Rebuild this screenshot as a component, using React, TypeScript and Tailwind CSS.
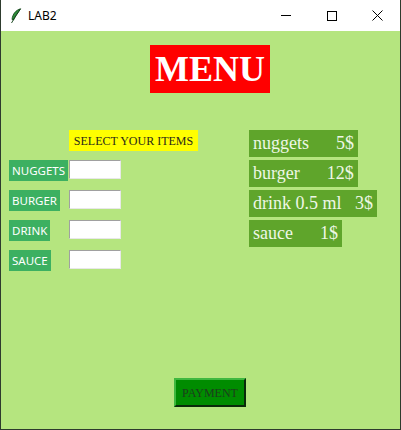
/**
 * LAB2 menu window
 *
 * Order form: item labels with quantity inputs, a price list,
 * and a payment button.
 */

const items = ["NUGGETS", "BURGER", "DRINK", "SAUCE"];

const prices = [
  "nuggets      5$",
  "burger      12$",
  "drink 0.5 ml   3$",
  "sauce      1$",
];

function Feather() {
  return (
    <svg width="12" height="16" viewBox="0 0 12 16">
      <path d="M10.5 0.8 C6 2 2.5 6 2 11.5 L3.5 12 C5 8 8 4.5 10.5 0.8 Z" fill="#2f8f3a" stroke="#0d3d14" strokeWidth="0.8" />
      <path d="M10.5 0.8 C8 5 5 9 1.5 15" fill="none" stroke="#0d3d14" strokeWidth="0.9" />
    </svg>
  );
}

function TitleBar() {
  return (
    <div className="flex h-[31px] items-center bg-white">
      <div className="ml-[9px] mt-[1px]">
        <Feather />
      </div>
      <span className="ml-[6px] text-[12px] text-black" style={{ fontFamily: '"Noto Sans", sans-serif' }}>
        LAB2
      </span>
      <div className="ml-auto flex items-center">
        {/* Minimize */}
        <div className="flex h-[31px] w-[46px] items-center justify-center">
          <div className="h-px w-[10px] bg-black" />
        </div>
        {/* Maximize */}
        <div className="flex h-[31px] w-[45px] items-center justify-center">
          <div className="h-[10px] w-[10px] border border-black" />
        </div>
        {/* Close */}
        <div className="flex h-[31px] w-[46px] items-center justify-center">
          <svg width="11" height="11" viewBox="0 0 11 11">
            <path d="M0.5 0.5 L10.5 10.5 M10.5 0.5 L0.5 10.5" stroke="#000" strokeWidth="1" />
          </svg>
        </div>
      </div>
    </div>
  );
}

export default function App() {
  return (
    <div className="flex h-[430px] w-[401px] flex-col border-x border-b border-[#2e3b2e] bg-white">
      <TitleBar />

      <div className="flex flex-1 flex-col bg-[#b5e57f]">
        {/* Heading */}
        <div
          className="ml-[149px] mt-[14px] flex h-[48px] w-[120px] items-center justify-center bg-[#ff0000] text-[36px] font-bold text-white"
          style={{ fontFamily: '"Liberation Serif", serif' }}
        >
          MENU
        </div>

        <div className="mt-[37px] flex items-start">
          {/* Order column */}
          <div className="flex flex-col">
            <div
              className="ml-[68px] flex h-[21px] w-[129px] items-center justify-center bg-[#ffff00] text-[12px] text-[#2a2a1a]"
              style={{ fontFamily: '"Liberation Serif", serif' }}
            >
              SELECT YOUR ITEMS
            </div>
            <div className="mt-[9px] flex flex-col gap-[9px]">
              {items.map((item) => (
                <div key={item} className="grid grid-cols-[68px_52px] items-start">
                  <div
                    className="ml-[8px] flex h-[21px] items-center justify-self-start bg-[#3cb061] px-[3px] text-[11.5px] text-white"
                    style={{ fontFamily: '"Noto Sans", sans-serif' }}
                  >
                    {item}
                  </div>
                  <input
                    type="text"
                    className="h-[19px] w-[52px] border border-t-[#a0a0a0] border-l-[#a0a0a0] border-r-[#e8e8e8] border-b-[#e8e8e8] bg-white outline-none"
                  />
                </div>
              ))}
            </div>
          </div>

          {/* Price list */}
          <div className="ml-[51px] flex flex-col items-start gap-[3px]">
            {prices.map((price) => (
              <div
                key={price}
                className="flex h-[27px] items-center whitespace-pre bg-[#5fa52b] px-[4px] text-[18px] text-[#eef7e6]"
                style={{ fontFamily: '"Liberation Serif", serif' }}
              >
                {price}
              </div>
            ))}
          </div>
        </div>

        <button
          className="ml-[173px] mt-[107px] flex h-[29px] w-[72px] items-center justify-center border-[2px] border-t-[#3fb83f] border-l-[#3fb83f] border-r-[#0a2a0a] border-b-[#0a2a0a] bg-[#008c00] text-[12px] text-[#1d3d1d]"
          style={{ fontFamily: '"Liberation Serif", serif' }}
        >
          PAYMENT
        </button>
      </div>
    </div>
  );
}
